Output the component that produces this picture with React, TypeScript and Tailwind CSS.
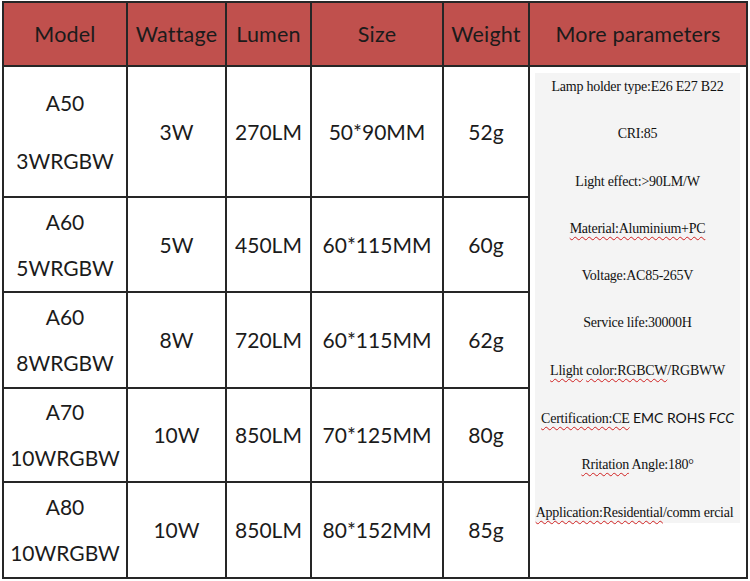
// Lamp spec table
const ROWS = [
    { model: ["A50", "3WRGBW"], watt: "3W", lumen: "270LM", size: "50*90MM", weight: "52g", h: "h-[129px]", gap: "gap-[34px]" },
    { model: ["A60", "5WRGBW"], watt: "5W", lumen: "450LM", size: "60*115MM", weight: "60g", h: "h-[93px]", gap: "gap-[22px]" },
    { model: ["A60", "8WRGBW"], watt: "8W", lumen: "720LM", size: "60*115MM", weight: "62g", h: "h-[94px]", gap: "gap-[22px]" },
    { model: ["A70", "10WRGBW"], watt: "10W", lumen: "850LM", size: "70*125MM", weight: "80g", h: "h-[92px]", gap: "gap-[22px]" },
    { model: ["A80", "10WRGBW"], watt: "10W", lumen: "850LM", size: "80*152MM", weight: "85g", h: "h-[94px]", gap: "gap-[22px]" },
];

const HEADERS = ["Model", "Wattage", "Lumen", "Size", "Weight", "More parameters"];
const WIDTHS = ["w-[122px]", "w-[97px]", "w-[83px]", "w-[130px]", "w-[84px]", "w-[216px]"];

const wavy = "underline decoration-wavy decoration-[#d02020] decoration-1 underline-offset-[3px]";

export default function App() {
    return (
        <div className="w-[750px] h-[581px] bg-white pt-[1px] pl-[2px] font-['Lato','Open_Sans',sans-serif] text-[#1b1b1b]">
            <div className="flex gap-[2px] bg-[#262626] p-[2px] w-fit">
                {/* Left five columns */}
                <div className="flex flex-col gap-[2px]">
                    <div className="flex gap-[2px] h-[62px]">
                        {HEADERS.slice(0, 5).map((h, i) => (
                            <div key={h} className={`${WIDTHS[i]} bg-[#c0504d] flex items-center justify-center text-[21.5px] tracking-[0.2px]`}>{h}</div>
                        ))}
                    </div>
                    {ROWS.map((r, idx) => (
                        <div key={idx} className={`flex gap-[2px] ${r.h} text-[21px]`}>
                            <div className={`${WIDTHS[0]} bg-white flex flex-col items-center justify-center ${r.gap} leading-[24px]`}>
                                <span>{r.model[0]}</span>
                                <span>{r.model[1]}</span>
                            </div>
                            <div className={`${WIDTHS[1]} bg-white flex items-center justify-center`}>{r.watt}</div>
                            <div className={`${WIDTHS[2]} bg-white flex items-center justify-center`}>{r.lumen}</div>
                            <div className={`${WIDTHS[3]} bg-white flex items-center justify-center`}>{r.size}</div>
                            <div className={`${WIDTHS[4]} bg-white flex items-center justify-center`}>{r.weight}</div>
                        </div>
                    ))}
                </div>

                {/* More parameters column */}
                <div className={`${WIDTHS[5]} flex flex-col gap-[2px]`}>
                    <div className="h-[62px] bg-[#c0504d] flex items-center justify-center text-[21.5px] tracking-[0.2px]">More parameters</div>
                    <div className="flex-1 bg-white pl-[5px] pr-[6px] pt-[6px]">
                        <div className="bg-[#f4f4f4] h-[450px] pt-[4px] flex flex-col items-center gap-[27.3px] font-['Liberation_Serif',serif] text-[14px] text-[#111] tracking-[-0.25px] whitespace-nowrap">
                            <p className="h-[20px] leading-[20px]">Lamp holder type:E26 E27 B22</p>
                            <p className="h-[20px] leading-[20px]">CRI:85</p>
                            <p className="h-[20px] leading-[20px]">Light effect:&gt;90LM/W</p>
                            <p className="h-[20px] leading-[20px]"><span className={wavy}>Material:Aluminium+PC</span></p>
                            <p className="h-[20px] leading-[20px]">Voltage:AC85-265V</p>
                            <p className="h-[20px] leading-[20px]">Service life:30000H</p>
                            <p className="h-[20px] leading-[20px]">
                                <span className={wavy}>Llight</span> <span className={wavy}>color:RGBCW</span>/RGBWW
                            </p>
                            <p className="h-[20px] leading-[20px]">
                                <span className={wavy}>Certification:CE</span>{" "}
                                <span className="font-['Lato',sans-serif] text-[14px] tracking-normal">EMC ROHS F<i>CC</i></span>
                            </p>
                            <p className="h-[20px] leading-[20px]">
                                <span className={wavy}>Rritation</span>  Angle:180°
                            </p>
                            <p className="h-[20px] leading-[20px] -ml-[6px]">
                                <span className={wavy}>Application:Residential</span>/comm ercial
                            </p>
                        </div>
                    </div>
                </div>
            </div>
        </div>
    );
}
